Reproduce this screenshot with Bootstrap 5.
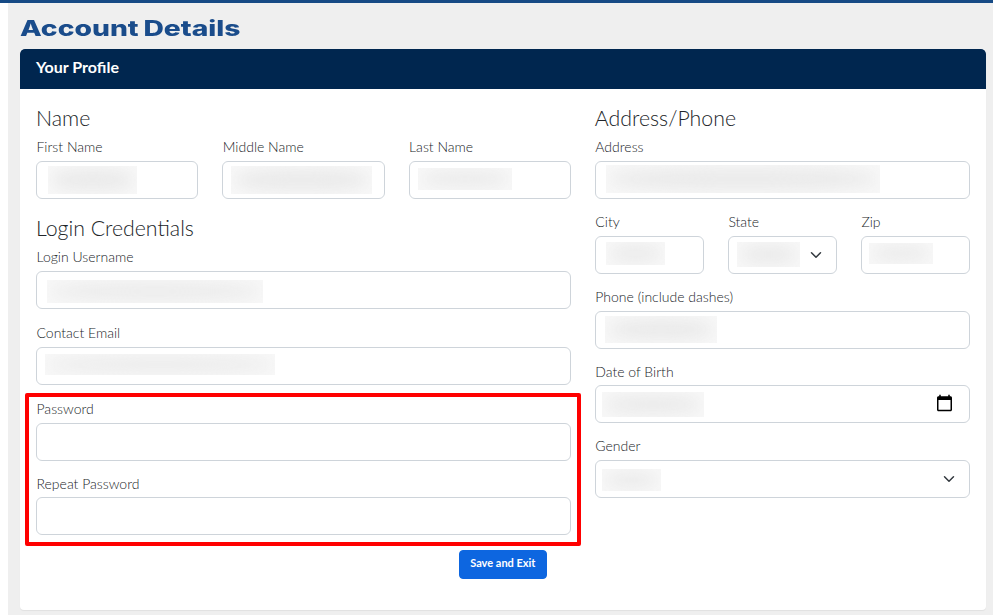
<!DOCTYPE html>
<html lang="en">
<head>
<meta charset="utf-8">
<title>Account Details</title>
<link href="https://cdn.jsdelivr.net/npm/bootstrap@5.3.0/dist/css/bootstrap.min.css" rel="stylesheet">
<style>
html,body{height:100%;overflow:hidden}
body{background:#fff;font-family:"Lato",sans-serif;color:#343a40}
.topbar{height:3px;background:#164a85}
.pagewrap{margin-left:8px;background:#efefef;height:612px;padding:0 7px 0 12px;overflow:hidden}
.pagetitle{font-family:"Inter",sans-serif;font-weight:800;font-size:21px;line-height:24px;color:#1a4c8b;margin:0;padding:14px 0 8px;transform:scaleX(1.345);transform-origin:0 50%;width:max-content;word-spacing:-1px}
.profilecard{height:561px;border:0;border-radius:4px;overflow:hidden;box-shadow:0 1px 1px rgba(0,0,0,.06)}
.profilehead{height:40px;background:#00264f;color:#fff;font-weight:700;font-size:16px;line-height:36px;padding:0 16px;border:0;border-radius:0}
.profilebody{padding:16px}
.sect{font-size:21.3px;font-weight:300;line-height:26px;color:#212529;margin:0 0 6px}
.sect-gap{margin-top:16px}
.lab{display:block;font-size:14px;font-weight:300;line-height:19px;margin:0 0 5px;padding-left:.5px;color:#212529}
.lab-last{line-height:21px;margin-bottom:3px}
.fld{position:relative}
.fld .form-control,.fld .form-select{height:38px;border-color:#ced4da;border-radius:6px;font-family:"Lato",sans-serif;font-size:14px}
.fld input[type=date]{color:transparent;font-size:16px;padding-right:14px}
.fld input[type=date]::-webkit-calendar-picker-indicator{width:19px;height:19px;padding:0;margin:-1px 1px 0 0;opacity:1}
.fgap-l{margin-bottom:14px}
.fgap-r{margin-bottom:12.8px}
.smudge{position:absolute;top:5px;bottom:5px;background:#f8f8f8;pointer-events:none;overflow:hidden}
.smudge::after{content:"";position:absolute;inset:4px;background:#e9e9e9;filter:blur(8px);border-radius:40%}
.s-first{left:12px;width:89px}
.s-mid{left:9px;width:141px}
.s-last{left:9px;width:94px;top:7px;bottom:9px}
.s-user{left:11px;width:216px;top:9px;bottom:6px}
.s-mail{left:9px;width:230px;top:7px;bottom:10px}
.s-addr{left:11px;width:274px;top:4px;bottom:6px}
.s-city{left:11px;width:59px;top:6px;bottom:9px}
.s-state{left:9px;width:63px;top:6px;bottom:7px}
.s-zip{left:8px;width:64px;top:7px;bottom:10px}
.s-phone{left:10px;width:112px;top:5px;bottom:6px}
.s-dob{left:7px;width:102px;top:7px;bottom:6px}
.s-gender{left:7px;width:59px;top:9px;bottom:7px}
.redbox{border:4px solid #f00;border-radius:2px;margin:8px -10px 0 -11px;padding:2px 6px 7px 7px}
.redbox .fgap-l{margin-bottom:12px}
.savebar{display:flex;justify-content:flex-end;padding:4px 24px 0 0}
.savebtn{width:88px;height:29px;padding:0 0 3px;background:#0d66e0;border-color:#0d66e0;border-radius:4px;font-size:11px;font-weight:700;line-height:22px}
</style>
</head>
<body>
<div class="topbar"></div>
<div class="pagewrap">
  <h1 class="pagetitle">Account Details</h1>
  <div class="card profilecard">
    <div class="card-header profilehead">Your Profile</div>
    <div class="card-body profilebody">
      <div class="row">
        <div class="col-7">
          <h4 class="sect">Name</h4>
          <div class="row">
            <div class="col-4"><label class="lab">First Name</label><div class="fld"><input class="form-control" type="text"><span class="smudge s-first"></span></div></div>
            <div class="col-4"><label class="lab">Middle Name</label><div class="fld"><input class="form-control" type="text"><span class="smudge s-mid"></span></div></div>
            <div class="col-4"><label class="lab">Last Name</label><div class="fld"><input class="form-control" type="text"><span class="smudge s-last"></span></div></div>
          </div>
          <h4 class="sect sect-gap">Login Credentials</h4>
          <div class="fgap-l"><label class="lab">Login Username</label><div class="fld"><input class="form-control" type="text"><span class="smudge s-user"></span></div></div>
          <div><label class="lab">Contact Email</label><div class="fld"><input class="form-control" type="text"><span class="smudge s-mail"></span></div></div>
          <div class="redbox">
            <div class="fgap-l"><label class="lab">Password</label><div class="fld"><input class="form-control" type="password"></div></div>
            <div><label class="lab lab-last">Repeat Password</label><div class="fld"><input class="form-control" type="password"></div></div>
          </div>
          <div class="savebar"><button type="button" class="btn btn-primary savebtn">Save and Exit</button></div>
        </div>
        <div class="col-5">
          <h4 class="sect">Address/Phone</h4>
          <div class="fgap-r"><label class="lab">Address</label><div class="fld"><input class="form-control" type="text"><span class="smudge s-addr"></span></div></div>
          <div class="row fgap-r">
            <div class="col-4"><label class="lab">City</label><div class="fld"><input class="form-control" type="text"><span class="smudge s-city"></span></div></div>
            <div class="col-4"><label class="lab">State</label><div class="fld"><select class="form-select"><option></option></select><span class="smudge s-state"></span></div></div>
            <div class="col-4"><label class="lab">Zip</label><div class="fld"><input class="form-control" type="text"><span class="smudge s-zip"></span></div></div>
          </div>
          <div class="fgap-r"><label class="lab">Phone (include dashes)</label><div class="fld"><input class="form-control" type="text"><span class="smudge s-phone"></span></div></div>
          <div class="fgap-r"><label class="lab lab-last">Date of Birth</label><div class="fld"><input class="form-control" type="date"><span class="smudge s-dob"></span></div></div>
          <div><label class="lab">Gender</label><div class="fld"><select class="form-select"><option></option></select><span class="smudge s-gender"></span></div></div>
        </div>
      </div>
    </div>
  </div>
</div>
<script src="https://cdn.jsdelivr.net/npm/bootstrap@5.3.0/dist/js/bootstrap.bundle.min.js"></script>
</body>
</html>
